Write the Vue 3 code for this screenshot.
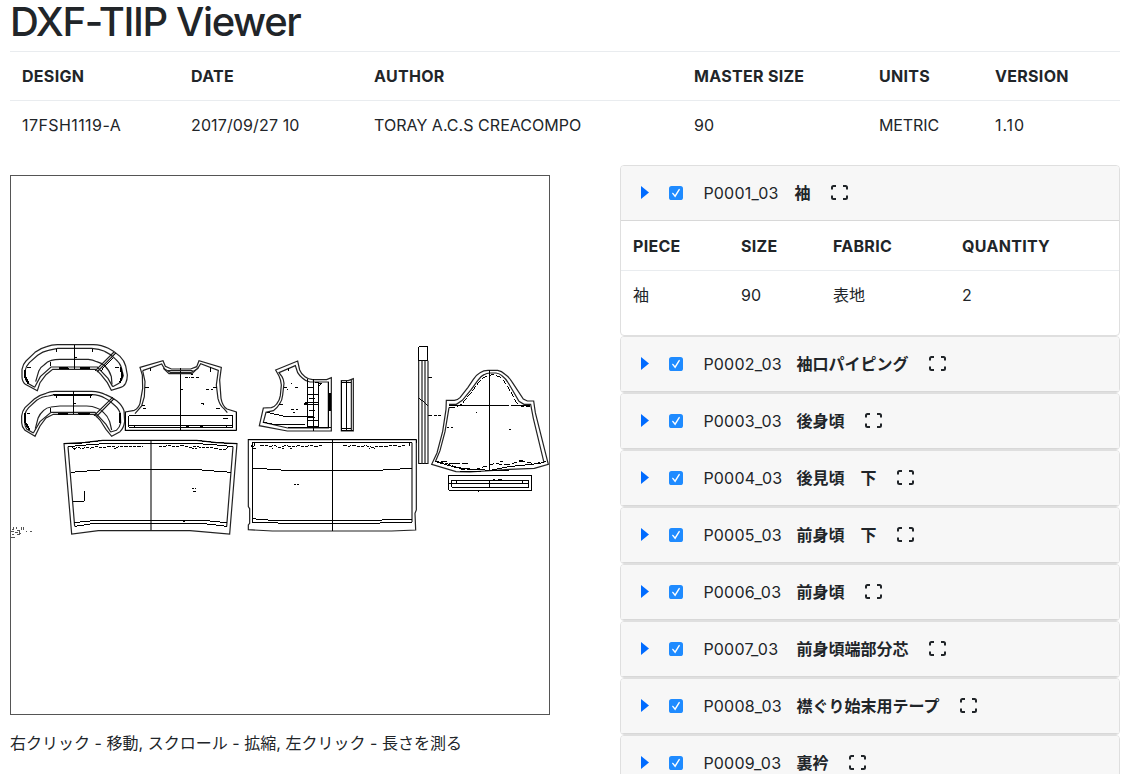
<script setup>
const meta = [
  { k: 'DESIGN', v: '17FSH1119-A', w: 169, s: 0.42 },
  { k: 'DATE', v: '2017/09/27 10', w: 183, s: 0.13 },
  { k: 'AUTHOR', v: 'TORAY A.C.S CREACOMPO', w: 320, s: 0.04 },
  { k: 'MASTER SIZE', v: '90', w: 185, s: 0.1 },
  { k: 'UNITS', v: 'METRIC', w: 116, s: -0.1 },
  { k: 'VERSION', v: '1.10', w: 137, s: 0.9 },
]
const detail = [
  { k: 'PIECE', v: '袖', w: 108 },
  { k: 'SIZE', v: '90', w: 92 },
  { k: 'FABRIC', v: '表地', w: 129 },
  { k: 'QUANTITY', v: '2', w: 169 },
]
const pieces = [
  { id: 'P0001_03', name: '袖', open: true },
  { id: 'P0002_03', name: '袖口パイピング' },
  { id: 'P0003_03', name: '後身頃' },
  { id: 'P0004_03', name: '後見頃　下' },
  { id: 'P0005_03', name: '前身頃　下' },
  { id: 'P0006_03', name: '前身頃' },
  { id: 'P0007_03', name: '前身頃端部分芯' },
  { id: 'P0008_03', name: '襟ぐり始末用テープ' },
  { id: 'P0009_03', name: '裏衿' },
]
</script>

<template>
  <div class="page">
    <h1>DXF-TIIP Viewer</h1>
    <table class="meta">
      <colgroup><col v-for="m in meta" :key="m.k" :style="{ width: m.w + 'px' }" /></colgroup>
      <thead><tr><th v-for="m in meta" :key="m.k"><span>{{ m.k }}</span></th></tr></thead>
      <tbody><tr><td v-for="m in meta" :key="m.k"><span :style="{ letterSpacing: m.s + 'px' }">{{ m.v }}</span></td></tr></tbody>
    </table>
    <div class="columns">
      <div class="left">
        <div class="canvas">
          <svg width="538" height="538" viewBox="11 176 538 538" shape-rendering="crispEdges">
            <!-- collar pieces -->
            <g transform="translate(0 330) scale(.33333)">
              <path class="g" d="M112 182L76 163Q66 154 66 140V118Q69 102 78 93L105 67Q120 55 140 50Q155 44 172 44H280Q305 45 325 55Q345 65 360 79Q373 92 377 108L382 135Q382 149 377 160Q372 170 360 173L334 181L322 158L303 134L288 118H158L138 134L120 158Z" />
              <path class="g" d="M104 172L86 161Q76 152 76 142V120Q78 109 88 98L113 76Q128 64 145 61L173 55H275Q298 56 314 64Q332 72 345 86Q360 99 364 112L370 137Q366 152 357 160L338 170M104 172L121 140L153 111H292L324 145L338 170" />
              <path class="g" d="M107 155L116 124Q121 111 132 105Q142 94 154 91Q165 88 180 88H265Q278 89 290 95Q305 99 315 108Q329 122 334 140L336 163" />
              <path d="M223 44V118M178 115H206M240 115H270M286 122L342 66M291 126L346 70M302 123L339 83M171 57V66M278 57V66M82 112H92M222 82H231M152 95V108M345 112H356" />
              <path class="b" d="M178 115H205M240 115H270M76 120V142L86 161M361 112L367 137L360 158" />
              <path class="g" d="M105 319L75 301Q65 290 65 278V258Q67 243 75 233L103 207Q120 194 138 190Q150 184 165 184H275Q300 185 317 194Q336 202 350 212Q367 226 372 242L374 275Q371 295 360 305L335 319L318 298L300 270L284 253H160L138 264L120 288Z" />
              <path class="g" d="M100 309L80 297Q74 288 74 275V256Q76 243 86 233L110 211Q126 199 145 198L165 194H275Q299 195 314 204Q330 211 343 225Q358 238 361 252L362 279Q360 291 349 301L332 306M100 309L120 275L153 247H285L318 283L332 306" />
              <path class="g" d="M106 296L114 265Q120 250 130 242Q140 232 153 231L180 228H260Q278 228 290 234Q302 237 311 248Q324 259 329 275L335 300" />
              <path d="M221 184V253M160 195H278M173 250H205M235 250H270M282 257L338 202M288 261L342 206M171 198V205M271 198V205M80 250H90M219 220H227M151 235V247" />
              <path class="b" d="M161 195H277M173 251H204M237 251H268M75 248V276L88 299M360 250V278" />
              <path class="g" d="M286 122L342 66M291 126L346 70M282 257L338 202M288 261L342 206" />
            </g>
            <!-- back bodice -->
            <g transform="translate(120 340) scale(.33333)">
              <path class="g" d="M60 82L129 62L136 79L154 87H212L230 80L237 62L304 82L299 120L303 175Q307 198 321 207L349 216V271H16V216L43 211Q56 204 60 190L68 145L67 105Z" />
              <path class="g" d="M68 92L125 72L134 87L153 98H212L233 86L242 71L295 91L289 135L294 176Q300 198 312 206L322 218M68 92L75 125L73 170L65 198L45 221" />
              <path d="M27 227H338V262H27ZM16 216V271H349V216M181 84V271M43 254V262M321 254V262M27 256H338M92 85V94M273 82V95M76 143H87M278 143H291M65 198H75M69 207H77M289 205H300M183 148H190" />
              <path class="g" d="M130 85L147 101H216L235 83M144 92H218" />
              <path d="M195 112h8m4 0h3m3 0h9m5 0h11M212 105h8M259 149h9m5 0h6M244 190h9M248 195h4M309 235h15M198 260h9M240 260h10" />
            </g>
            <!-- front bodice and facing -->
            <g transform="translate(250 340) scale(.33333)">
              <path class="g" d="M77 90L143 63L149 90Q154 103 165 110Q175 118 188 119H230L244 113V273H112L28 257L40 204L64 203Q74 200 80 192Q89 181 91 167L94 135Q93 120 87 108Z" />
              <path class="g" d="M87 98L136 77L143 98Q149 108 157 114Q167 124 180 126H235V264H113L40 247L48 217L70 212Q82 204 88 193Q97 181 98 165L102 130Q101 118 96 110Z" />
              <path d="M50 217L108 230H190M40 247L80 255H165M113 264H244M173 118V260M235 126V264M190 118V273M206 125V264M173 142H190M173 165H206M165 188H206M173 195H206M178 175H196M178 212H196M173 232H196M173 242H206M173 260H206M115 84V94M103 144H112M134 143H144M88 193H98M122 130H127M124 208h8m5 0h8M129 218h5M111 150h4M195 127L215 130L207 137" />
              <path class="b" d="M239 160V213M162 192H175" />
              <path class="g" d="M274 122H295L310 116V273H274ZM304 118V273" />
              <path d="M274 122V273H310M289 122V273M274 127H304M274 265H304" />
            </g>
            <!-- tape, sleeve and cuff -->
            <g transform="translate(400 335) scale(.33333)">
              <path d="M56 35H84V77H56ZM56 387H84M56 188L84 212M85 128H97m-12 113H96m6 0h8m4 0h9M140 277h8m4 0h6" />
              <path class="g" d="M56 77V387M84 77V387M66 77V387M75 77V387" />
              <path class="g" d="M139 196H163Q173 195 180 188L204 157L220 133Q229 119 240 113Q251 106 264 106H293Q305 108 314 117Q327 126 335 139L370 192L382 198H401L406 233L445 388L403 400L328 403L210 411L168 410L95 388L111 354L128 289L138 223Z" />
              <path class="g" d="M147 208H169L187 196L214 163L233 137Q241 124 252 119Q260 114 270 114H288Q298 115 306 122Q318 131 325 144L357 199L372 208H392L400 250L432 383M106 380L120 347L135 290L147 218" />
              <path d="M432 383L395 388L325 395L270 406L210 402L167 397L106 380" />
              <path stroke-dasharray="17 6" d="M147 217H168L186 207L217 168L237 141L255 125L272 120H286L303 128L321 150L352 207L368 216H391M112 380L148 388L181 402L225 404L282 386L325 389L362 379L405 386L437 380" />
              <path d="M268 106V407M147 211H327M334 211H391M122 379h20m5 8h34m6 0h18M300 379h9M357 377h11M227 232h3M328 283h5M180 410H243M270 408H327" />
              <path d="M146 421H395V466H146ZM156 436H386V457H156ZM146 445H386M268 436V457M171 436V445M368 436V445M279 433h5m9 0h13M231 466L236 471" />
            </g>
            <!-- lower back -->
            <g transform="translate(50 430) scale(.33333)">
              <path class="g" d="M42 41L105 37L158 31H440L500 38L561 41L539 312L420 302H145L65 312Z" />
              <path class="g" d="M54 50L74 289M549 50L530 289M303 31V302" />
              <path d="M42 41H72L107 38L158 31H440L500 38L561 41M54 50L130 43L180 40H430L490 44L549 50M530 289L455 280H135L74 289M72 278L140 271H460L530 278" />
              <path d="M62 127L175 118H430L543 127M103 182V214H68M66 51L74 60" />
              <path stroke-dasharray="10 3" d="M72 56L85 52L96 56L108 51L120 55L140 50L159 53L182 49L200 52L222 48L241 51L257 48L278 49M327 49L345 49L357 46L375 50L397 47L418 52L440 49L457 54L480 51L503 57L530 59L532 51" />
              <path d="M427 175h5m3 0h4M429 186h9M400 276h5M425 57h7m4 0h5M193 56h5" />
            </g>
            <!-- lower front -->
            <g transform="translate(240 430) scale(.33333)">
              <path class="g" d="M25 29H529V240L525 250L527 300L455 303H97L25 299V285L29 280V236L25 230ZM516 38V276" />
              <path d="M25 29H529V38M37 38H516M516 269H450L380 272H105L37 266M37 38V277H68L180 282H376L448 277H516" />
              <path d="M36 115H53L138 121H413L498 116H516M277 29V303M34 45V50L45 47V40M508 39V49M162 165h5m4 0h5M40 56h7" />
              <path stroke-dasharray="11 3" d="M60 46H76L90 50L103 46L118 52L137 47L158 50L176 47L193 51L212 46L231 50L245 46M309 46L325 49L340 46L358 50L377 47L399 53L418 48L438 50L457 46L478 49L495 46" />
              <path d="M96 55h4m26 0h5m20 1h5M386 55h5m10 0h5" />
            </g>
            <path class="g" d="M11 531.5h3M13.5 527v3m3-3v2m3 1v5m2-8v3m2-3v3M15 532.5h3M12 534.5h2m3 0h3M11 537.5h4M20 533.5h1M26 531.5h1m3 0h2M12 529.5h2M17 530.5h2" />
          </svg>
        </div>
        <p class="help">右クリック - 移動, スクロール - 拡縮, 左クリック - 長さを測る</p>
      </div>
      <div class="right">
        <div v-for="p in pieces" :key="p.id" class="card" :class="{ open: p.open }">
          <div class="head">
            <svg class="tri" width="8" height="13" viewBox="0 0 8 13"><path d="M0 0L8 6.5L0 13Z" /></svg>
            <svg class="check" width="14" height="14" viewBox="0 0 14 14"><rect width="14" height="14" rx="2.6" /><path d="M3.8 7.4L6.1 10.2L10.2 3.6" /></svg>
            <span class="pid">{{ p.id }}</span>
            <b class="name">{{ p.name }}</b>
            <svg class="expand" width="17" height="15" viewBox="0 0 17 15"><path d="M1 4.5V2.5Q1 1 2.5 1H5M12 1H14.5Q16 1 16 2.5V4.5M16 10.5V12.5Q16 14 14.5 14H12M5 14H2.5Q1 14 1 12.5V10.5" /></svg>
          </div>
          <div v-if="p.open" class="body">
            <table>
              <colgroup><col v-for="d in detail" :key="d.k" :style="{ width: d.w + 'px' }" /></colgroup>
              <thead><tr><th v-for="d in detail" :key="d.k"><span>{{ d.k }}</span></th></tr></thead>
              <tbody><tr><td v-for="d in detail" :key="d.k"><span>{{ d.v }}</span></td></tr></tbody>
            </table>
          </div>
        </div>
      </div>
    </div>
  </div>
</template>

<style>
body { margin: 0; background: #fff; overflow: hidden; }
</style>

<style scoped>
.page { width: 1131px; height: 774px; box-sizing: border-box; padding: 0 11px 0 10px; font: 16px/24px Inter, "Noto Sans CJK JP", sans-serif; color: #212529; }
h1 { margin: 0; padding-bottom: 3px; height: 48px; font-size: 40px; line-height: 44px; font-weight: 500; letter-spacing: -1.4px; }
table { border-collapse: separate; border-spacing: 0; table-layout: fixed; width: 100%; }
th, td { box-sizing: border-box; height: 49px; padding: 0 12px; text-align: left; white-space: nowrap; border-top: 1px solid #e9ecef; line-height: 24px; }
th { font-weight: 650; letter-spacing: .3px; }
td { letter-spacing: .1px; }
.columns { display: flex; align-items: flex-start; justify-content: space-between; margin-top: 16px; }
.left { width: 540px; padding-top: 10px; }
.canvas { box-sizing: border-box; width: 540px; height: 540px; border: 1px solid #555; }
.canvas svg { display: block; }
.canvas path { fill: none; stroke: #000; stroke-width: 3; }
.canvas path.g { stroke: #222; stroke-width: 3.6; shape-rendering: geometricPrecision; }
.canvas path.b { stroke-width: 6; }
.canvas > svg > path.g { stroke: #555; stroke-width: 1; }
.help { margin: 16px 0 0; white-space: nowrap; letter-spacing: .02px; }
.right { width: 500px; height: 609px; }
.card { box-sizing: border-box; border: 1px solid #dfdfdf; border-radius: 4px; overflow: hidden; }
.head { box-sizing: border-box; height: 55px; display: flex; align-items: center; padding-left: 20px; background: #f7f7f7; border-bottom: 1px solid #d8d8d8; }
.tri { fill: #006bff; margin-bottom: 1px; }
.check { margin-left: 20px; }
.check rect { fill: #1f8bff; }
.check path { fill: none; stroke: #fff; stroke-width: 1.4; stroke-linecap: round; }
.pid { margin-left: 20.4px; width: 78px; letter-spacing: .2px; }
.open .pid { width: 76px; }
.name { margin-left: 15.2px; font-weight: 700; }
.expand { margin: 0 0 1px 20px; fill: none; stroke: #212529; stroke-width: 2; }
.body { height: 114px; }
.body tr:first-child th { border-top: 0; }
.body td { border-top-color: #e9ecef; }
</style>
